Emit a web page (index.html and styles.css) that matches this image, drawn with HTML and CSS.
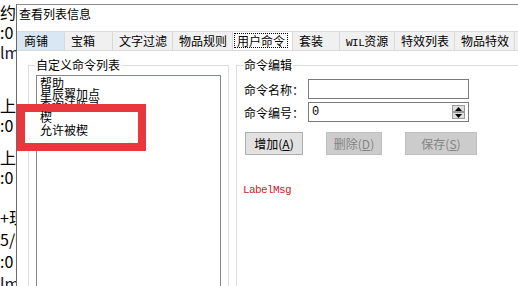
FILE: index.html
```html
<!DOCTYPE html>
<html lang="zh">
<head>
    <meta charset="UTF-8">
    <title>查看列表信息</title>
    <link rel="stylesheet" href="styles.css">
</head>
<body>
    <!-- text of the window lying behind -->
    <div class="behind">
        <div class="chunk">
            <p class="frag">约V</p>
            <p class="frag">:0</p>
            <p class="frag dark">lm</p>
        </div>
        <div class="chunk c2">
            <p class="frag">上面</p>
            <p class="frag">:0</p>
        </div>
        <div class="chunk c3">
            <p class="frag">上面</p>
            <p class="frag">:0</p>
        </div>
        <div class="chunk c4">
            <p class="frag">+现</p>
            <p class="frag">5/0</p>
            <p class="frag">:0</p>
            <p class="frag dark">lm</p>
        </div>
    </div>

    <div class="window">
        <div class="title">查看列表信息</div>

        <div class="tabs">
            <span class="tab hover w48">商铺</span>
            <span class="tab w48">宝箱</span>
            <span class="tab w60">文字过滤</span>
            <span class="tab w60">物品规则</span>
            <span class="tab w60 active"><span class="focus">用户命令</span></span>
            <span class="tab w47">套装</span>
            <span class="tab w55"><span class="latin">WIL</span>资源</span>
            <span class="tab w60">特效列表</span>
            <span class="tab w60">物品特效</span>
            <span class="tab w60">物品属性</span>
        </div>

        <div class="panel">
            <fieldset class="group list-group">
                <legend>自定义命令列表</legend>
                <div class="listbox">
                    <div class="item">帮助</div>
                    <div class="item">星辰翼加点</div>
                    <div class="item">查询法阵录</div>
                    <div class="item boxed">楔</div>
                    <div class="item boxed">允许被楔</div>
                </div>
            </fieldset>

            <fieldset class="group edit-group">
                <legend>命令编辑</legend>
                <div class="row">
                    <label for="cmd-name">命令名称：</label>
                    <input class="field" id="cmd-name" type="text">
                </div>
                <div class="row second">
                    <label>命令编号：</label>
                    <div class="field spin">
                        <span class="spin-value">0</span>
                        <div class="spin-btns">
                            <span class="spin-btn">
                                <svg width="7" height="4" viewBox="0 0 7 4"><polygon points="3.5,0 7,4 0,4" fill="#000"/></svg>
                            </span>
                            <span class="spin-btn">
                                <svg width="7" height="4" viewBox="0 0 7 4"><polygon points="0,0 7,0 3.5,4" fill="#000"/></svg>
                            </span>
                        </div>
                    </div>
                </div>
                <div class="buttons">
                    <button class="btn btn-add">增加(<u>A</u>)</button>
                    <button class="btn btn-del" disabled>删除(<u>D</u>)</button>
                    <button class="btn btn-save" disabled>保存(<u>S</u>)</button>
                </div>
                <div class="msg">LabelMsg</div>
            </fieldset>
        </div>
    </div>

    <!-- red annotation frame -->
    <div class="mark"></div>
</body>
</html>
```

FILE: styles.css
```css
body {
    margin: 0;
    width: 518px;
    height: 286px;
    overflow: hidden;
    position: relative;
    display: flex;
    background-color: #fff;
    color: #000;
    font-family: "Noto Sans CJK SC", "Liberation Sans", sans-serif;
    font-size: 12px;
}

/* window behind, only a strip shows */
.behind {
    flex: none;
    width: 16px;
    overflow: hidden;
    white-space: nowrap;
    font-size: 16px;
    line-height: 20px;
    padding-top: 2px;
}
.frag {
    margin: 0;
    height: 20px;
}
.frag.dark {
    color: #14143a;
}
.chunk.c2 {
    margin-top: 33px;
}
.chunk.c3 {
    margin-top: 12px;
}
.chunk.c4 {
    margin-top: 20px;
}
.chunk.c4 .frag {
    height: 22px;
}

/* dialog */
.window {
    flex: 1;
    min-width: 0;
    margin-top: 4px;
    border-top: 1px solid #8c8c8c;
    border-left: 1px solid #6b6b6b;
    display: flex;
    flex-direction: column;
    background-color: #fff;
}
.title {
    height: 26px;
    box-sizing: border-box;
    padding: 2px 0 0 2px;
    line-height: 14px;
}

.tabs {
    display: flex;
    height: 20px;
    box-sizing: border-box;
    border-bottom: 1px solid #d9d9d9;
    white-space: nowrap;
}
.tab {
    flex: none;
    height: 19px;
    box-sizing: border-box;
    border-top: 1px solid #d9d9d9;
    border-right: 1px solid #d9d9d9;
    background-color: #f0f0f0;
    padding-left: 6px;
    line-height: 17px;
}
.tab.hover {
    background-color: #d9e6f4;
    padding-left: 7px;
}
.tab.active {
    background-color: #fff;
    padding-left: 2px;
}
.focus {
    display: inline-block;
    line-height: 13px;
    padding: 0 2px;
    outline: 1px dotted #000;
}
.latin {
    font-family: "Liberation Mono", monospace;
    font-size: 11px;
    letter-spacing: -0.5px;
}
.w47 { width: 47px; }
.w48 { width: 48px; }
.w55 { width: 55px; }
.w60 { width: 60px; }

.panel {
    flex: 1;
    display: flex;
    gap: 7px;
    padding: 7px 0 0 11px;
    overflow: hidden;
}

.group {
    flex: none;
    margin: 0;
    min-width: 0;
    height: 260px;
    box-sizing: border-box;
    border: 1px solid #dcdcdc;
    padding: 0 0 0 6px;
}
.group legend {
    padding: 0 1px;
    line-height: 14px;
    font-size: 12px;
}
.list-group {
    width: 201px;
}
.edit-group {
    width: 300px;
}

.listbox {
    width: 185px;
    height: 240px;
    box-sizing: border-box;
    margin: 3px 0 0 1px;
    padding: 1px 0 0 3px;
    border: 1px solid #828790;
    overflow: hidden;
    white-space: nowrap;
}
.item {
    height: 11px;
    line-height: 11px;
}
.item.boxed {
    position: relative;
    z-index: 2;
    height: 13px;
    line-height: 13px;
}

/* command edit form */
.row {
    display: flex;
    align-items: center;
    height: 20px;
    margin: 7px 0 0 1px;
}
.row.second {
    margin-top: 3px;
}
.row label {
    width: 64px;
    flex: none;
}
.field {
    width: 161px;
    height: 20px;
    box-sizing: border-box;
    margin: 0;
    border: 1px solid #7a7a7a;
    padding: 0 3px;
    background-color: #fff;
    font-family: inherit;
    font-size: 12px;
}
.spin {
    display: flex;
    align-items: center;
    justify-content: space-between;
    padding-right: 3px;
}
.spin-value {
    font-family: "Liberation Mono", monospace;
    font-size: 12px;
    letter-spacing: -1px;
}
.spin-btns {
    display: flex;
    flex-direction: column;
}
.spin-btn {
    width: 13px;
    height: 7px;
    box-sizing: border-box;
    border: 1px solid #9a9a9a;
    background-color: #dedede;
    display: flex;
    align-items: center;
    justify-content: center;
}

.buttons {
    display: flex;
    gap: 23px;
    margin: 10px 0 0 2px;
}
.btn {
    height: 23px;
    box-sizing: border-box;
    padding: 0;
    border: 1px solid #adadad;
    background-color: #e1e1e1;
    color: #000;
    font-family: inherit;
    font-size: 12px;
}
.btn:disabled {
    border-color: #bfbfbf;
    background-color: #cccccc;
    color: #838383;
}
.btn-add { width: 58px; }
.btn-del { width: 56px; }
.btn-save { width: 72px; }

.msg {
    margin-top: 28px;
    color: #c62828;
    font-family: "Liberation Mono", monospace;
    font-size: 11px;
    letter-spacing: -0.6px;
    line-height: 14px;
}

/* annotation over the list */
.mark {
    position: absolute;
    left: 17px;
    top: 104px;
    width: 129px;
    height: 47px;
    box-sizing: border-box;
    border: 8px solid #e8383d;
    background-color: #fff;
    z-index: 1;
}
```
